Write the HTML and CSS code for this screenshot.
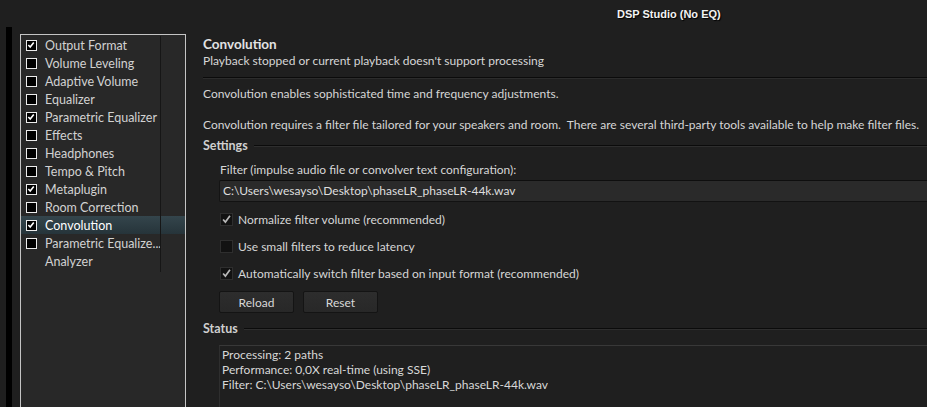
FILE: index.html
```html
<!DOCTYPE html>
<html>
<head>
<meta charset="utf-8">
<link rel="stylesheet" href="styles.css">
</head>
<body>
<div class="window">
  <div class="titlebar"><span class="title">DSP Studio (No EQ)</span></div>
  <div class="main">
    <div class="edge"></div>
    <div class="sidebar">
      <ul class="list">
        <li class="item"><span class="cb on"><svg viewBox="0 0 9 9"><path d="M1.5 4.5 L3.6 6.8 L7.6 1.8"/></svg></span>Output Format</li>
        <li class="item"><span class="cb"></span>Volume Leveling</li>
        <li class="item"><span class="cb"></span>Adaptive Volume</li>
        <li class="item"><span class="cb"></span>Equalizer</li>
        <li class="item"><span class="cb on"><svg viewBox="0 0 9 9"><path d="M1.5 4.5 L3.6 6.8 L7.6 1.8"/></svg></span>Parametric Equalizer</li>
        <li class="item"><span class="cb"></span>Effects</li>
        <li class="item"><span class="cb"></span>Headphones</li>
        <li class="item"><span class="cb"></span>Tempo &amp; Pitch</li>
        <li class="item"><span class="cb on"><svg viewBox="0 0 9 9"><path d="M1.5 4.5 L3.6 6.8 L7.6 1.8"/></svg></span>Metaplugin</li>
        <li class="item"><span class="cb"></span>Room Correction</li>
        <li class="item selected"><span class="cb on"><svg viewBox="0 0 9 9"><path d="M1.5 4.5 L3.6 6.8 L7.6 1.8"/></svg></span>Convolution</li>
        <li class="item"><span class="cb"></span>Parametric Equalize...</li>
        <li class="item"><span class="cb none"></span>Analyzer</li>
      </ul>
    </div>
    <div class="content">
      <div class="head">
        <div class="h1">Convolution</div>
        <div class="sub">Playback stopped or current playback doesn't support processing</div>
      </div>
      <div class="rule"></div>
      <p class="p1">Convolution enables sophisticated time and frequency adjustments.</p>
      <p class="p2">Convolution requires a filter file tailored for your speakers and room.&nbsp; There are several third-party tools available to help make filter files.</p>
      <div class="section"><span class="stitle">Settings</span><span class="sline"></span></div>
      <div class="group">
        <div class="label">Filter (impulse audio file or convolver text configuration):</div>
        <div class="input">C:\Users\wesayso\Desktop\phaseLR_phaseLR-44k.wav</div>
        <div class="check"><span class="box"><svg viewBox="0 0 13 13"><path d="M2.5 6.5 L5.2 9.6 L10.6 2.2"/></svg></span>Normalize filter volume (recommended)</div>
        <div class="check"><span class="box"></span>Use small filters to reduce latency</div>
        <div class="check"><span class="box"><svg viewBox="0 0 13 13"><path d="M2.5 6.5 L5.2 9.6 L10.6 2.2"/></svg></span>Automatically switch filter based on input format (recommended)</div>
        <div class="buttons"><button class="btn">Reload</button><button class="btn">Reset</button></div>
      </div>
      <div class="section status-sec"><span class="stitle">Status</span><span class="sline"></span></div>
      <div class="status">
        <div>Processing: 2 paths</div>
        <div>Performance: 0,0X real-time (using SSE)</div>
        <div>Filter: C:\Users\wesayso\Desktop\phaseLR_phaseLR-44k.wav</div>
      </div>
    </div>
  </div>
</div>
</body>
</html>
```
FILE: styles.css
```css
html, body {
  margin: 0;
  padding: 0;
  background: #1f1f1f;
  height: 100%;
  overflow: hidden;
}
.window {
  font-family: Lato, "Noto Sans", sans-serif;
  font-size: 12px;
  color: #d6d6d6;
  height: 407px;
  display: flex;
  flex-direction: column;
}
.titlebar {
  height: 27px;
  display: flex;
  align-items: center;
  padding-left: 617px;
  box-sizing: border-box;
}
.title {
  font-family: "Liberation Sans", Arial, sans-serif;
  font-weight: bold;
  font-size: 11px;
  color: #f2f2f2;
  text-shadow: 1px 1px 1px #000;
}
.main {
  flex: 1;
  display: flex;
  min-height: 0;
}
.edge {
  width: 6px;
  margin-left: 6px;
  background: #000;
  flex: none;
}
.sidebar {
  flex: none;
  margin-left: 8px;
  margin-top: 7px;
  width: 166px;
  box-sizing: border-box;
  border: 1px solid #c4c4c4;
  border-bottom: none;
  background: #282828;
}
.list {
  list-style: none;
  margin: 0;
  padding: 0;
  padding-top: 1px;
  height: 236px;
  position: relative;
}
.list::after {
  content: "";
  position: absolute;
  left: 139px;
  top: 1px;
  bottom: 0;
  width: 1px;
  background: #161616;
}
.item {
  height: 18px;
  display: flex;
  align-items: center;
  padding-left: 5px;
  color: #d2d2d2;
  white-space: nowrap;
  font-size: 12.5px;
}
.item.selected {
  background: linear-gradient(#34454c, #26343a);
  color: #ffffff;
}
.cb {
  width: 11px;
  height: 11px;
  box-sizing: border-box;
  border: 1.5px solid #ececec;
  background: #000;
  margin-right: 8px;
  flex: none;
  display: flex;
}
.cb.none {
  visibility: hidden;
}
.cb svg {
  width: 8px;
  height: 8px;
}
.cb svg path {
  fill: none;
  stroke: #fff;
  stroke-width: 1.8;
}
.content {
  flex: 1;
  min-width: 0;
  padding-left: 17px;
  overflow: hidden;
}
.head {
  padding-top: 9px;
}
.h1 {
  font-weight: bold;
  font-size: 13.5px;
  line-height: 17px;
  color: #e2e2e2;
}
.sub {
  line-height: 16px;
}
.rule {
  margin-top: 8px;
  height: 1px;
  border-top: 1px solid #0b0b0b;
  background: #2c2c2c;
}
.p1 {
  margin: 7px 0 0 0;
  line-height: 16px;
  white-space: nowrap;
}
.p2 {
  margin: 15px 0 0 0;
  line-height: 16px;
  white-space: nowrap;
}
.section {
  margin-top: 5px;
  display: flex;
  align-items: center;
  line-height: 16px;
}
.stitle {
  font-weight: bold;
  font-size: 12.5px;
  color: #cfcfcf;
}
.sline {
  flex: 1;
  margin-left: 6px;
  height: 1px;
  border-top: 1px solid #0b0b0b;
  background: #2e2e2e;
}
.group {
  padding-left: 16px;
}
.label {
  margin-top: 8px;
  line-height: 16px;
  padding-left: 1px;
}
.input {
  margin-top: 2px;
  height: 22px;
  box-sizing: border-box;
  background: #2a2a2a;
  border-top: 1px solid #0e0e0e;
  border-bottom: 1px solid #121212;
  border-left: 1px solid #141414;
  border-radius: 2px 0 0 2px;
  padding-left: 3px;
  line-height: 20px;
  color: #dedede;
  white-space: nowrap;
}
.check {
  height: 20px;
  display: flex;
  align-items: center;
  margin-top: 7px;
  padding-left: 1px;
}
.check:first-of-type {
  margin-top: 8px;
}
.box {
  width: 13px;
  height: 13px;
  box-sizing: border-box;
  background: #121212;
  border: 1px solid #2e2e2e;
  margin-right: 5px;
  flex: none;
  display: flex;
}
.box svg {
  width: 11px;
  height: 11px;
}
.box svg path {
  fill: none;
  stroke: #b8b8b8;
  stroke-width: 2;
}
.buttons {
  display: flex;
  gap: 9px;
  margin-top: 8px;
}
.btn {
  width: 75px;
  height: 22px;
  box-sizing: border-box;
  background: linear-gradient(#2d2d2d, #282828);
  border: 1px solid #141414;
  border-radius: 2px;
  color: #d8d8d8;
  font-family: Lato, "Noto Sans", sans-serif;
  font-size: 12px;
  padding: 0;
}
.status-sec {
  margin-top: 8px;
}
.status {
  margin-top: 8px;
  margin-left: 16px;
  border-top: 1px solid #383838;
  border-left: 1px solid #2e2e2e;
  padding: 1px 0 0 2px;
  line-height: 15px;
  height: 80px;
  white-space: nowrap;
  color: #d8d8d8;
}
```
